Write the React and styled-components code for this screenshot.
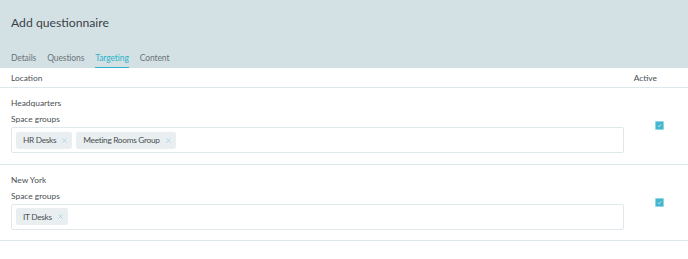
import React from 'react'
import styled, { createGlobalStyle } from 'styled-components'

const Global = createGlobalStyle`
body{
  margin:0;
  background:#fff;
  font-family:Lato, "Noto Sans", sans-serif;
  color:#4a4f52;
}
`

const Header = styled.div`
background:#d3e1e5;
height:68px;
padding:0 11px;
box-sizing:border-box;
display:flex;
flex-direction:column;
justify-content:space-between;
`

const Title = styled.h1`
margin:15px 0 0;
font-size:12.2px;
font-weight:400;
color:#3b4245;
`

const Tabs = styled.div`
display:flex;
gap:11px;
`

const Tab = styled.div`
font-size:8.5px;
letter-spacing:-0.1px;
color:${p => (p.$active ? '#2eb2c9' : '#6b7478')};
padding-bottom:4px;
border-bottom:1.5px solid ${p => (p.$active ? '#2eb2c9' : 'transparent')};
`

const HeadRow = styled.div`
display:flex;
justify-content:space-between;
align-items:center;
height:19px;
padding:0 31px 0 11px;
border-bottom:1.5px solid #dbe9ec;
font-size:8.4px;
color:#4a4f52;
`

const Row = styled.div`
display:flex;
align-items:center;
padding:10px 0 10.5px 11px;
border-bottom:1.5px solid #dbe9ec;
`

const Fields = styled.div`
flex:0 0 613px;
display:flex;
flex-direction:column;
`

const Label = styled.div`
font-size:8.4px;
color:#4a4f52;
line-height:10px;
margin-bottom:${p => p.$gap}px;
`

const Input = styled.div`
height:24px;
border:1px solid #dfe9eb;
border-radius:2px;
display:flex;
align-items:center;
gap:4px;
padding:0 4px;
`

const Chip = styled.div`
display:flex;
align-items:center;
gap:6px;
height:17px;
padding:0 5px 0 7px;
background:#e9eff1;
border-radius:2px;
font-size:8.3px;
letter-spacing:-0.3px;
color:#4a4f52;
`

const CheckCell = styled.div`
flex:1;
display:flex;
justify-content:center;
padding-left:6px;
`

const Check = styled.div`
width:7px;
height:7px;
background:#45b6cf;
border:1px solid #8fd6e3;
border-radius:1px;
display:flex;
align-items:center;
justify-content:center;
`

const Close = () => (
  <svg width="5" height="5" viewBox="0 0 10 10">
    <path d="M1 1 L9 9 M9 1 L1 9" stroke="#8fd0dc" strokeWidth="1.4" fill="none" />
  </svg>
)

const Box = () => (
  <Check>
    <svg width="5" height="5" viewBox="0 0 10 10">
      <path d="M2 5.5 L4 7.5 L8 3" stroke="#fff" strokeWidth="1.4" fill="none" />
    </svg>
  </Check>
)

const locations = [
  { name: 'Headquarters', groups: ['HR Desks', 'Meeting Rooms Group'] },
  { name: 'New York', groups: ['IT Desks'] },
]

export default function App() {
  return (
    <>
      <Global />
      <Header>
        <Title>Add questionnaire</Title>
        <Tabs>
          <Tab>Details</Tab>
          <Tab>Questions</Tab>
          <Tab $active>Targeting</Tab>
          <Tab>Content</Tab>
        </Tabs>
      </Header>
      <HeadRow>
        <span>Location</span>
        <span>Active</span>
      </HeadRow>
      {locations.map(l => (
        <Row key={l.name}>
          <Fields>
            <Label $gap={6}>{l.name}</Label>
            <Label $gap={3}>Space groups</Label>
            <Input>
              {l.groups.map(g => (
                <Chip key={g}>
                  {g}
                  <Close />
                </Chip>
              ))}
            </Input>
          </Fields>
          <CheckCell>
            <Box />
          </CheckCell>
        </Row>
      ))}
    </>
  )
}
